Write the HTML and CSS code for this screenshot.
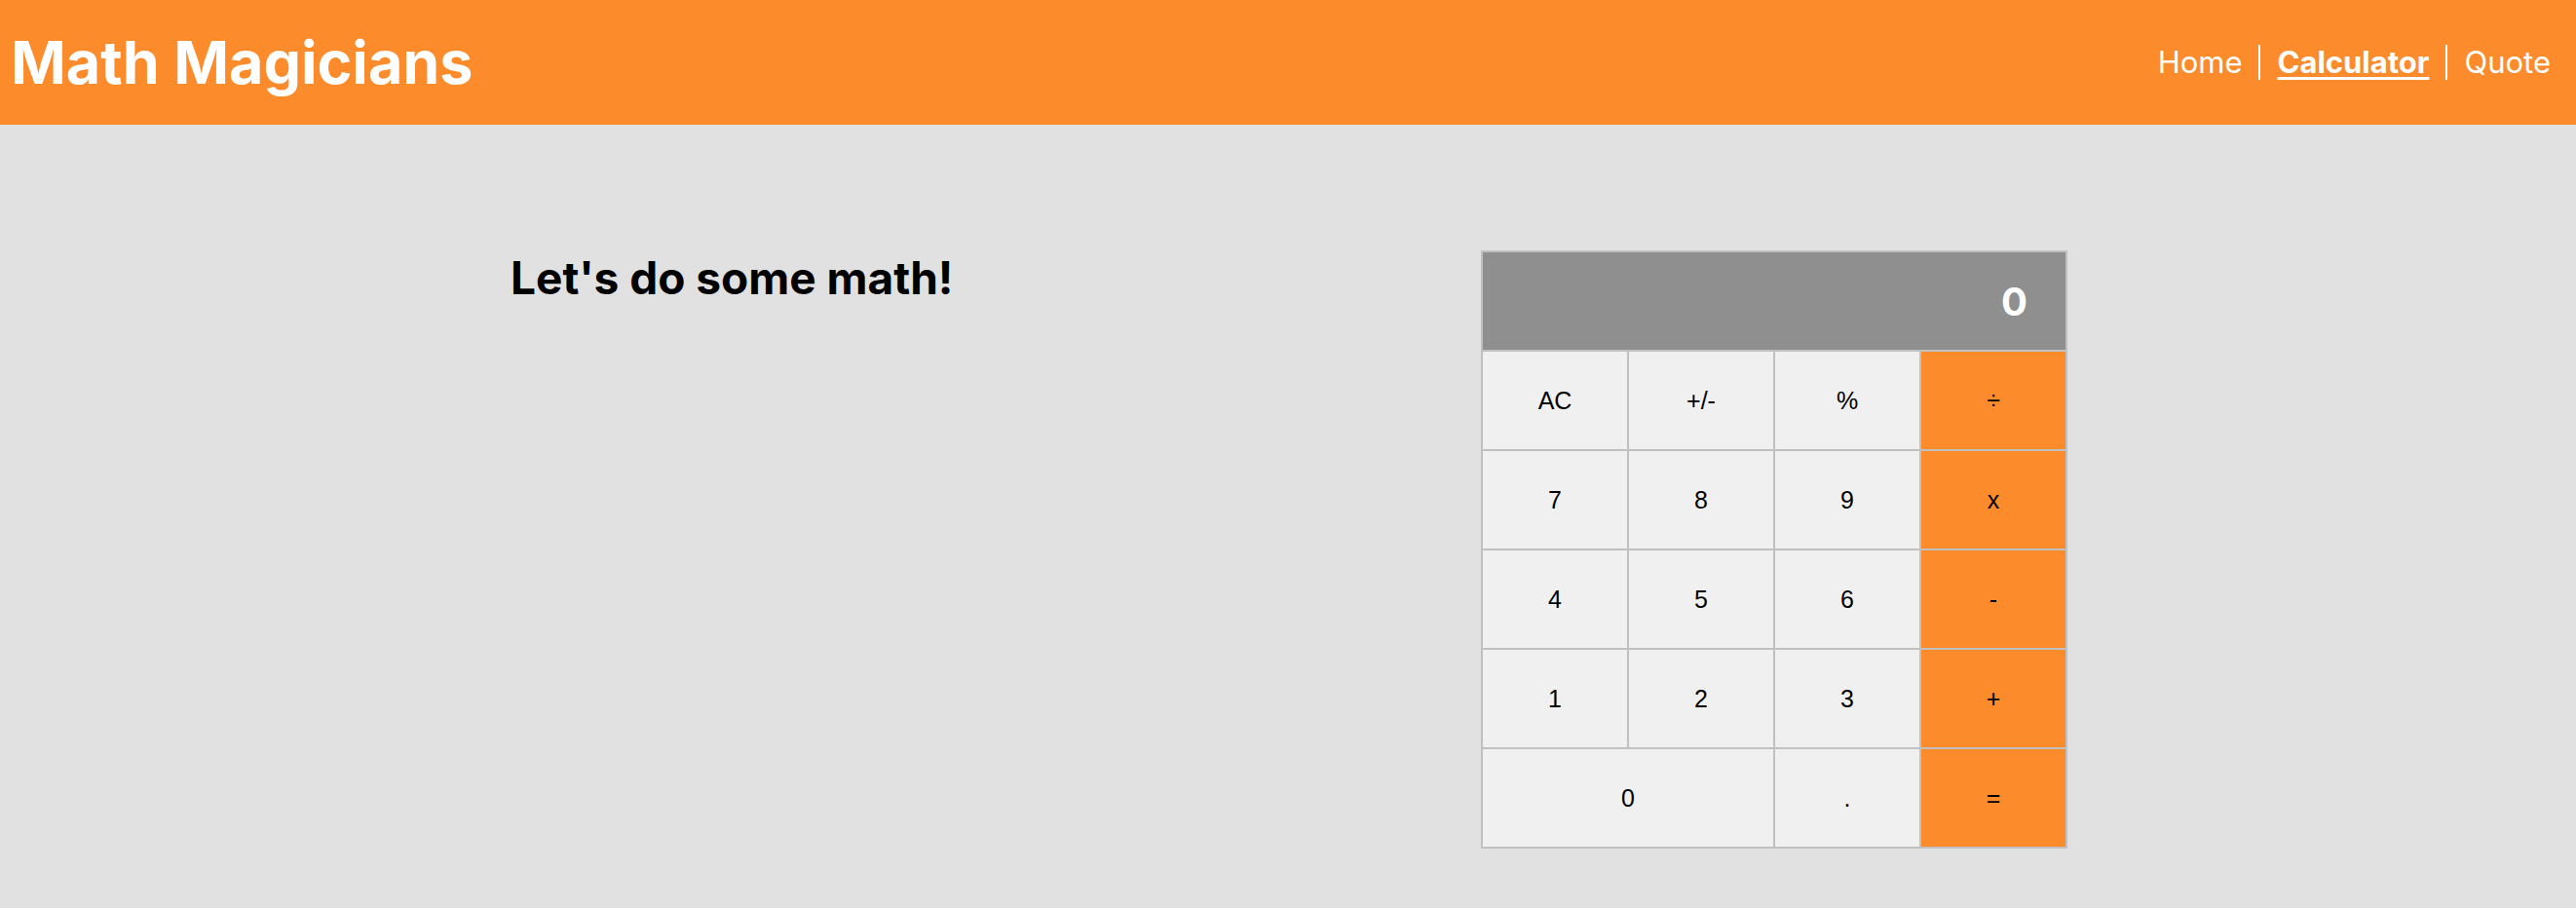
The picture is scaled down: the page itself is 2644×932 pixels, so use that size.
FILE: index.html
```html
<!DOCTYPE html>
<html lang="en">
<head>
<meta charset="utf-8">
<title>Math Magicians</title>
<link rel="stylesheet" href="styles.css">
</head>
<body>
<header class="topbar">
  <h1 class="brand">Math Magicians</h1>
  <nav class="nav">
    <a class="nav-link" href="#">Home</a>
    <a class="nav-link active" href="#">Calculator</a>
    <a class="nav-link" href="#">Quote</a>
  </nav>
</header>
<main class="page">
  <h2 class="intro">Let's do some math!</h2>
  <div class="calc">
    <div class="display">0</div>
    <button class="key">AC</button>
    <button class="key">+/-</button>
    <button class="key">%</button>
    <button class="key op">÷</button>
    <button class="key">7</button>
    <button class="key">8</button>
    <button class="key">9</button>
    <button class="key op">x</button>
    <button class="key">4</button>
    <button class="key">5</button>
    <button class="key">6</button>
    <button class="key op">-</button>
    <button class="key">1</button>
    <button class="key">2</button>
    <button class="key">3</button>
    <button class="key op">+</button>
    <button class="key wide">0</button>
    <button class="key">.</button>
    <button class="key op">=</button>
  </div>
</main>
</body>
</html>
```
FILE: styles.css
```css
* { box-sizing: border-box; }

html, body {
  margin: 0;
  padding: 0;
}

body {
  background: #e1e1e1;
  font-family: Inter, "Noto Sans", sans-serif;
  color: #000;
  min-height: 932px;
}

.topbar {
  height: 128px;
  background: #fc8b2c;
  display: flex;
  align-items: center;
  justify-content: space-between;
  padding: 0 9px 0 11px;
}

.brand {
  margin: 0;
  font-size: 61px;
  font-weight: 700;
  color: #fff;
  line-height: 1;
}

.nav {
  display: flex;
  align-items: center;
}

.nav-link {
  color: #fff;
  text-decoration: none;
  font-size: 31px;
  font-weight: 400;
  padding: 0 17px;
  line-height: 36px;
}

.nav-link + .nav-link {
  border-left: 2px solid #fff;
}

.nav-link.active {
  font-weight: 700;
  text-decoration: underline;
  text-underline-offset: 4px;
}

.page {
  display: grid;
  grid-template-columns: 996px 602px;
  align-items: start;
  padding: 129px 0 0 524px;
}

.intro {
  margin: 0;
  font-size: 46px;
  font-weight: 700;
}

.calc {
  display: grid;
  grid-template-columns: repeat(4, 148px);
  grid-auto-rows: 100px;
  gap: 2px;
  padding: 2px;
  background: #c0c0c0;
  width: 602px;
}

.display {
  grid-column: 1 / -1;
  background: #8f8f8f;
  color: #fff;
  font-family: Inter, "Noto Sans", sans-serif;
  font-weight: 700;
  font-size: 40px;
  display: flex;
  align-items: center;
  justify-content: flex-end;
  padding-right: 39px;
}

.key {
  border: 0;
  margin: 0;
  padding: 0;
  background: #f0f0f0;
  font-family: "Liberation Sans", Arial, sans-serif;
  font-size: 25px;
  color: #000;
}

.key.op {
  background: #fc8b2c;
}

.key.wide {
  grid-column: span 2;
}
```
